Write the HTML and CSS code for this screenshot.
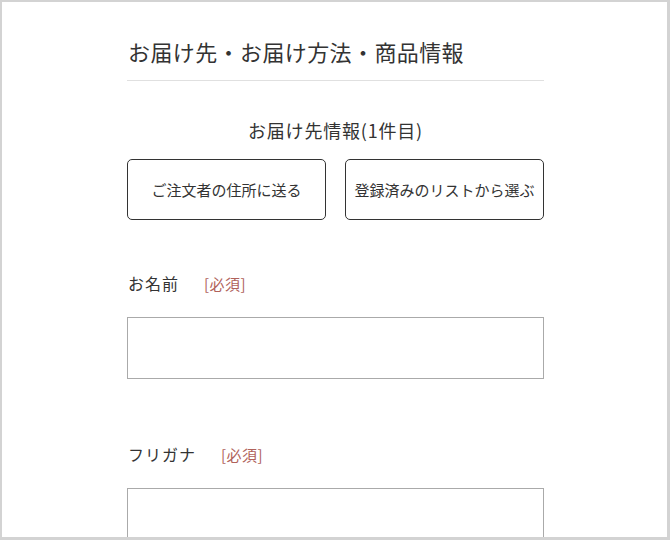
FILE: index.html
```html
<!DOCTYPE html>
<html lang="ja">

<head>
    <meta charset="UTF-8">
    <meta name="viewport" content="width=device-width, initial-scale=1.0">
    <title>お届け先・お届け方法・商品情報</title>
    <link rel="stylesheet" href="styles.css">
</head>

<body>
    <div class="frame">
        <div class="column">
            <!--見出し-->
            <h1 class="page-title">お届け先・お届け方法・商品情報</h1>

            <h2 class="sub-title">お届け先情報(1件目)</h2>

            <!--お届け先の選択ボタン-->
            <div class="choice-buttons">
                <button type="button">ご注文者の住所に送る</button>
                <button type="button">登録済みのリストから選ぶ</button>
            </div>

            <!--入力欄-->
            <div class="field">
                <label for="name">お名前<span class="required">[必須]</span></label>
                <input type="text" id="name">
            </div>
            <div class="field field-kana">
                <label for="kana">フリガナ<span class="required">[必須]</span></label>
                <input type="text" id="kana">
            </div>
        </div>
    </div>
</body>

</html>
```

FILE: styles.css
```css
body {
    font-family: "Noto Sans CJK JP", "Noto Sans", sans-serif;
    margin: 0;
    padding: 0;
    background-color: white;
    color: #333;
}

.frame {
    box-sizing: border-box;
    height: 540px;
    overflow: hidden;
    border: 2px solid #d3d3d3;
    border-right-width: 3px;
    border-bottom-width: 3px;
}

.column {
    width: 417px;
    margin-left: 125px;
}

.page-title {
    margin: 0;
    padding: 32px 0 12px 1px;
    font-size: 22px;
    font-weight: normal;
    line-height: 34px;
    letter-spacing: 0.4px;
    border-bottom: 1px solid #e0e0e0;
}

.sub-title {
    margin: 36px 0 0;
    font-size: 18px;
    font-weight: normal;
    line-height: 26px;
    letter-spacing: 0.8px;
    text-align: center;
}

.choice-buttons {
    display: flex;
    gap: 19px;
    margin-top: 16px;
}

.choice-buttons button {
    flex: 1;
    height: 61px;
    padding: 0;
    background-color: white;
    border: 1px solid #333;
    border-radius: 5px;
    font-family: inherit;
    font-size: 15px;
    color: #333;
    cursor: pointer;
}

.field {
    margin-top: 51px;
}

.field-kana {
    margin-top: 63px;
}

.field label {
    display: block;
    padding-left: 1px;
    font-size: 16px;
    line-height: 24px;
    letter-spacing: 1px;
}

.required {
    margin-left: 25px;
    font-size: 15px;
    color: #b0625a;
    letter-spacing: 0.5px;
}

.field input {
    display: block;
    box-sizing: border-box;
    width: 100%;
    height: 62px;
    margin-top: 21px;
    border: 1px solid #aaa;
    font-size: 16px;
}
```
